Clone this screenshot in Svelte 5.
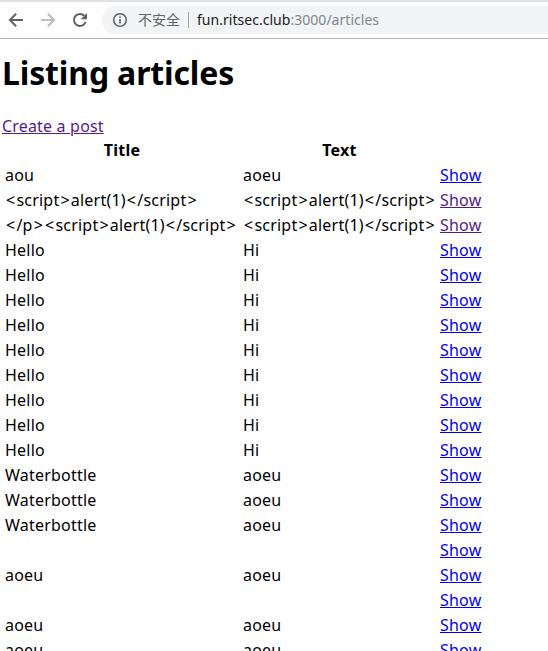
<script>
  const xss = '<script>alert(1)</' + 'script>';
  const articles = [
    { title: 'aou', text: 'aoeu' },
    { title: xss, text: xss, visited: true },
    { title: '</p>' + xss, text: xss, visited: true },
    ...Array.from({ length: 9 }, () => ({ title: 'Hello', text: 'Hi' })),
    ...Array.from({ length: 3 }, () => ({ title: 'Waterbottle', text: 'aoeu' })),
    { title: '', text: '' },
    { title: 'aoeu', text: 'aoeu' },
    { title: '', text: '' },
    { title: 'aoeu', text: 'aoeu' },
    { title: 'aoeu', text: 'aoeu' }
  ];
  const pieces = (s) => s.split(/([<>])/).filter(Boolean);
</script>

{#snippet cell(value)}{#each pieces(value) as part}{#if part === '<' || part === '>'}<span class="angle">{part}</span>{:else}{part}{/if}{/each}{/snippet}

<div class="window">
  <header class="toolbar">
    <svg class="icon" viewBox="0 0 16 16"><path d="M15 8H2.4M8.2 1.7L1.9 8L8.2 14.3" /></svg>
    <svg class="icon off" viewBox="0 0 16 16"><path d="M1 8h12.6M7.8 1.7L14.1 8L7.8 14.3" /></svg>
    <svg class="icon" viewBox="0 0 16 16"><path d="M13.6 10A6 6 0 1 1 12.4 3.9" /><path class="fill" d="M15 1v6.3H8.7z" /></svg>
    <div class="omnibox">
      <svg class="info" viewBox="0 0 16 16"><circle cx="8" cy="8" r="6.3" /><path d="M8 7v4.4M8 4.4v1.7" /></svg>
      <span class="insecure">不安全</span>
      <span class="divider"></span>
      <span class="url"><b>fun.ritsec.club</b>:3000/articles</span>
    </div>
  </header>
  <main>
    <h1>Listing articles</h1>
    <a class="visited create" href="#new">Create a post</a>
    <table>
      <colgroup><col class="c1" /><col class="c2" /><col class="c3" /></colgroup>
      <thead><tr><th>Title</th><th>Text</th><th></th></tr></thead>
      <tbody>
        {#each articles as article}
          <tr>
            <td>{@render cell(article.title)}</td>
            <td>{@render cell(article.text)}</td>
            <td><a class:visited={article.visited} href="#show">Show</a></td>
          </tr>
        {/each}
      </tbody>
    </table>
  </main>
</div>

<style>
  .window {
    height: 651px;
    overflow: hidden;
    background: #fff;
    color: #000;
    font: 16px/22px "Noto Sans", "Noto Sans CJK SC", sans-serif;
  }
  .toolbar {
    box-sizing: border-box;
    height: 39px;
    border-top: 2px solid #dee1e6;
    border-bottom: 1px solid #b3b4b5;
    padding-left: 8px;
    display: flex;
    align-items: center;
  }
  .icon {
    width: 16px;
    height: 16px;
    margin-right: 16px;
    flex: none;
    fill: none;
    stroke: #5f6368;
    stroke-width: 2;
  }
  .icon.off { stroke: #babcbe; }
  .icon .fill { fill: #5f6368; stroke: none; }
  .omnibox {
    height: 28px;
    flex: 1;
    margin-left: -2px;
    border-radius: 14px 0 0 14px;
    background: #f1f3f4;
    display: flex;
    align-items: center;
    padding-left: 10px;
  }
  .info {
    width: 16px;
    height: 16px;
    fill: none;
    stroke: #5f6368;
    stroke-width: 1.6;
  }
  .insecure {
    width: 42px;
    margin-left: 10px;
    padding-bottom: 2px;
    font: 14px/20px "Noto Sans CJK SC", sans-serif;
    color: #5f6368;
  }
  .divider {
    width: 1px;
    height: 16px;
    margin: 0 8px 0 8px;
    background: #9aa0a6;
  }
  .url {
    font-size: 14px;
    line-height: 20px;
    letter-spacing: 0.03px;
    color: #80868b;
    white-space: nowrap;
  }
  .url b { font-weight: 400; color: #202124; }
  main { padding: 12px 2px 0; }
  h1 {
    margin: 0 0 21px;
    font-size: 32px;
    line-height: 43px;
    font-weight: 700;
    letter-spacing: -0.15px;
  }
  a { color: #0000ee; text-decoration: underline; }
  a.visited { color: #551a8b; }
  .create {
    display: block;
    width: max-content;
    margin-bottom: 1px;
    letter-spacing: 0.18px;
  }
  table {
    table-layout: fixed;
    width: 484px;
    border-collapse: collapse;
  }
  .c1 { width: 238px; }
  .c2 { width: 197px; }
  .c3 { width: 49px; }
  th, td {
    height: 25px;
    padding: 0 3px;
    line-height: 25px;
    text-align: left;
    white-space: nowrap;
    letter-spacing: 0.22px;
  }
  th {
    padding: 0 2px 0 4px;
    text-align: center;
  }
  .angle {
    display: inline-block;
    width: 11.4px;
    text-align: center;
  }
</style>
